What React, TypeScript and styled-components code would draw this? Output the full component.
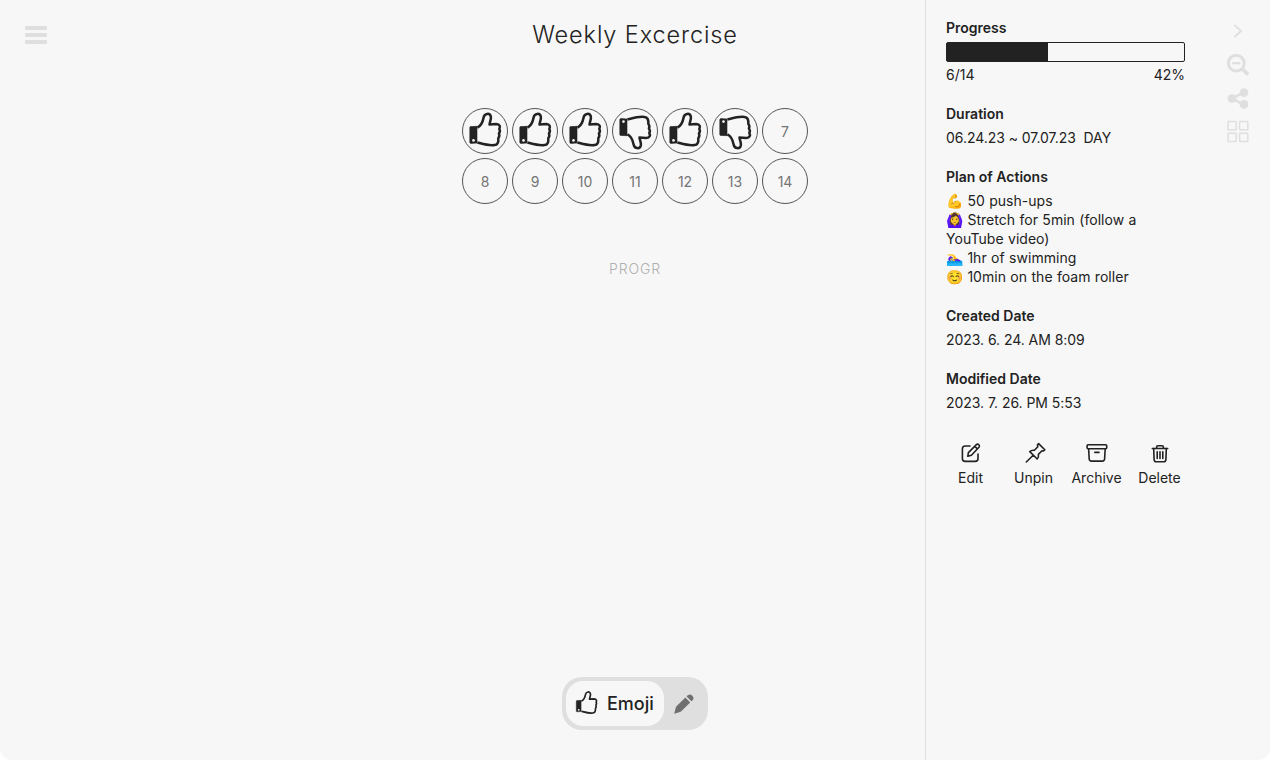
import React, { FC, ReactNode } from "react";
import styled, { createGlobalStyle } from "styled-components";

type Mark = "up" | "down" | null;

const TOTAL_DAYS = 14;
const MARKS: Mark[] = ["up", "up", "up", "down", "up", "down"];
const DAYS: Mark[] = Array.from(
  { length: TOTAL_DAYS },
  (_, i) => MARKS[i] ?? null
);

const PLAN = [
  "💪 50 push-ups",
  "🙆‍♀️ Stretch for 5min (follow a YouTube video)",
  "🏊‍♀️ 1hr of swimming",
  "☺️ 10min on the foam roller",
];

const Thumb: FC<{ size: number; down?: boolean }> = ({ size, down }) => (
  <ThumbSvg width={size} height={size} viewBox="0 0 46 46" $down={down}>
    <path
      d="M8.6 18.6L15 18.3V35L9 35.4Q7.8 35.4 7.8 34.2V19.6Q7.8 18.6 8.6 18.6Z"
      fill="#222"
      stroke="#222"
      strokeWidth="0.6"
    />
    <circle cx="11.5" cy="32.4" r="1.3" fill="#f7f7f7" />
    <path
      d="M15.4 19.6C18.6 18 20.7 14.5 21.6 9.5C22.3 5.2 28 4.4 28.9 8.8C29.3 11.5 27.6 14 27.5 16.6L34.2 16.1C38 16.2 38.6 19 37.3 20.8C38.1 22.3 37.9 24.3 36.9 25.5C37.7 27.2 37.3 29 36.3 30.3C36.6 33.8 35.8 36.7 32.5 37.1C27 38 21 36 15.4 34.5"
      fill="none"
      stroke="#222"
      strokeWidth="2.5"
      strokeLinejoin="round"
    />
  </ThumbSvg>
);

const EditIcon = () => (
  <LineSvg width="22" height="22" viewBox="0 0 22 22">
    <path d="M10 4H5.2Q2.4 4 2.4 6.8V16.8Q2.4 19.4 5.2 19.4H15.2Q18 19.4 18 16.8V12" />
    <path d="M7.8 14.3L8.4 10.6L16.4 2.6Q17.6 1.6 18.8 2.7Q20.1 4 19 5.3L11.4 13.2ZM14.8 4.3L17.4 6.8" />
  </LineSvg>
);

const PinIcon = () => (
  <LineSvg width="26" height="22" viewBox="-4 0 26 22">
    <path d="M13.6 1.6L19.8 7.8L18.4 9L17 8.8L13.4 12.4Q14 15.3 12.2 17L4.8 9.6Q6.4 7.9 9.4 8.3L12.8 4.7L12.4 3ZM8.2 13.2L1.3 20" />
  </LineSvg>
);

const ArchiveIcon = () => (
  <LineSvg width="22" height="22" viewBox="0 0 22 22">
    <rect x="1.1" y="2.8" width="19.6" height="3.9" rx="1" />
    <path d="M2.6 6.8L3.2 17Q3.4 19.1 5.4 19.1H16.4Q18.4 19.1 18.6 17L19.2 6.8M8.8 10.4H13" />
  </LineSvg>
);

const TrashIcon = () => (
  <LineSvg width="22" height="22" viewBox="0 0 22 22">
    <path d="M3.3 6.5H18.7M7.6 6.3V5.1Q7.6 3.8 9 3.8H13Q14.4 3.8 14.4 5.1V6.3" />
    <path d="M4.7 6.6L5.1 17.6Q5.3 19.7 7 19.7H15Q16.7 19.7 16.9 17.6L17.3 6.6M8.2 9.7V16.5M11 9.7V16.5M13.8 9.7V16.5" />
  </LineSvg>
);

const PencilIcon = () => (
  <svg width="22" height="22" viewBox="0 0 22 22" fill="#6f6f6f">
    <path d="M1.2 20.8L2.8 14.6Q3.2 13.6 4 12.8L12.4 4.6L17.2 9.4L8.8 17.8Q8 18.6 7 19Z" />
    <path d="M13.6 3.5L15 2.2Q17.2.6 19.3 2.7Q21.4 5 19.8 7L18.4 8.3Z" />
  </svg>
);

const ChevronIcon = () => (
  <svg width="24" height="22" viewBox="0 0 24 22" fill="none">
    <path d="M8.4 4.9L15 11L8.4 17.1" stroke="#dfdfdf" strokeWidth="1.9" />
  </svg>
);

const ZoomOutIcon = () => (
  <svg width="24" height="24" viewBox="0 0 24 24" fill="none" stroke="#dfdfdf">
    <circle cx="10.3" cy="10.2" r="7.9" strokeWidth="3" />
    <path d="M6.3 10.2H14.3" strokeWidth="2.2" />
    <path d="M16.5 16.3L22.2 21.6" strokeWidth="3.6" />
  </svg>
);

const ShareIcon = () => (
  <svg width="24" height="21" viewBox="0 0.6 24 21">
    <path
      d="M18 5L6 11.2L18 17.4"
      fill="none"
      stroke="#dfdfdf"
      strokeWidth="2.6"
    />
    <g fill="#dfdfdf">
      <circle cx="18" cy="5.2" r="4.3" />
      <circle cx="5.9" cy="11.1" r="4.3" />
      <circle cx="18" cy="17" r="4.3" />
    </g>
  </svg>
);

const GridIcon = () => (
  <svg
    width="24"
    height="23"
    viewBox="0 -0.6 24 23"
    fill="none"
    stroke="#dfdfdf"
    strokeWidth="1.5"
  >
    <rect x="2" y="1" width="8.2" height="8.2" rx="0.6" />
    <rect x="13.6" y="1" width="8.2" height="8.2" rx="0.6" />
    <rect x="2" y="12.6" width="8.2" height="8.2" rx="0.6" />
    <rect x="13.6" y="12.6" width="8.2" height="8.2" rx="0.6" />
  </svg>
);

const ACTIONS = [
  { label: "Edit", icon: <EditIcon /> },
  { label: "Unpin", icon: <PinIcon /> },
  { label: "Archive", icon: <ArchiveIcon /> },
  { label: "Delete", icon: <TrashIcon /> },
];

const Field: FC<{ title: string; children: ReactNode }> = ({
  title,
  children,
}) => (
  <FieldWrapper>
    <FieldTitle>{title}</FieldTitle>
    {children}
  </FieldWrapper>
);

const App: FC = () => {
  const percent = Math.floor((MARKS.length / TOTAL_DAYS) * 100);

  return (
    <>
      <GlobalStyle />
      <Page>
        <LeftColumn>
          <MenuButton aria-label="Menu">
            <span />
            <span />
            <span />
          </MenuButton>
        </LeftColumn>

        <Main>
          <Title>Weekly Excercise</Title>
          <Board>
            {DAYS.map((mark, i) => (
              <Day key={i}>
                {mark ? <Thumb size={46} down={mark === "down"} /> : i + 1}
              </Day>
            ))}
          </Board>
          <Watermark>PROGR</Watermark>
          <Toggle>
            <EmojiTab>
              <Thumb size={31} />
              Emoji
            </EmojiTab>
            <PencilTab aria-label="Draw">
              <PencilIcon />
            </PencilTab>
          </Toggle>
        </Main>

        <Aside>
          <Details>
            <Field title="Progress">
              <ProgressBar>
                <ProgressFill style={{ width: `${percent + 0.6}%` }} />
              </ProgressBar>
              <ProgressLabels>
                <span>
                  {MARKS.length}/{TOTAL_DAYS}
                </span>
                <span>{percent}%</span>
              </ProgressLabels>
            </Field>
            <Field title="Duration">
              <Value>{"06.24.23 ~ 07.07.23  DAY"}</Value>
            </Field>
            <Field title="Plan of Actions">
              {PLAN.map((line) => (
                <PlanLine key={line}>{line}</PlanLine>
              ))}
            </Field>
            <Field title="Created Date">
              <Value>2023. 6. 24. AM 8:09</Value>
            </Field>
            <Field title="Modified Date">
              <Value>2023. 7. 26. PM 5:53</Value>
            </Field>
            <Actions>
              {ACTIONS.map(({ label, icon }) => (
                <Action key={label}>
                  {icon}
                  {label}
                </Action>
              ))}
            </Actions>
          </Details>
          <Tools>
            <ChevronIcon />
            <ZoomOutIcon />
            <ShareIcon />
            <GridIcon />
          </Tools>
        </Aside>
      </Page>
    </>
  );
};

export default App;

const GlobalStyle = createGlobalStyle`
  * {
    box-sizing: border-box;
  }

  body {
    margin: 0;
    background: #fff;
    color: #222;
    font-family: Inter, "Liberation Sans", sans-serif;
  }

  button {
    padding: 0;
    border: 0;
    background: none;
    color: inherit;
    font-family: inherit;
  }
`;

const Page = styled.div`
  display: grid;
  grid-template-columns: 345px 1fr 345px;
  height: 760px;
  overflow: hidden;
  background: #f7f7f7;
  border-radius: 0 0 12px 12px;
`;

const LeftColumn = styled.div`
  padding: 25.5px 25px;
`;

const MenuButton = styled.button`
  display: flex;
  flex-direction: column;
  gap: 3px;
  width: 22px;

  span {
    height: 4px;
    border-radius: 1px;
    background: #dfdfdf;
  }
`;

const Main = styled.main`
  display: flex;
  flex-direction: column;
  align-items: center;
  padding: 20px 0 30px;
`;

const Title = styled.h1`
  margin: 0;
  font-size: 23.5px;
  font-weight: 300;
  line-height: 30px;
  letter-spacing: 0.88px;
`;

const Board = styled.div`
  display: grid;
  grid-template-columns: repeat(7, 46px);
  gap: 4px;
  margin-top: 58px;
`;

const Day = styled.div`
  display: flex;
  align-items: center;
  justify-content: center;
  height: 46px;
  border: 1px solid #555;
  border-radius: 50%;
  color: #757575;
  font-size: 14px;

  svg {
    flex: none;
  }
`;

const ThumbSvg = styled.svg<{ $down?: boolean }>`
  transform: ${({ $down }) => ($down ? "scaleY(-1)" : "none")};
`;

const LineSvg = styled.svg`
  fill: none;
  stroke: #222;
  stroke-width: 1.6;
  stroke-linecap: round;
  stroke-linejoin: round;
`;

const Watermark = styled.div`
  margin-top: 55px;
  color: #b0b0b0;
  font-size: 14px;
  font-weight: 300;
  line-height: 20px;
  letter-spacing: 0.9px;
`;

const Toggle = styled.div`
  display: flex;
  width: 146px;
  height: 53px;
  margin-top: auto;
  padding: 4px;
  border-radius: 20px;
  background: #dfdfdf;
`;

const EmojiTab = styled.button`
  display: flex;
  align-items: center;
  gap: 5px;
  width: 98px;
  padding-left: 5px;
  border-radius: 17px;
  background: #f7f7f7;
  font-size: 18px;
  font-weight: 500;
`;

const PencilTab = styled.button`
  display: flex;
  flex: 1;
  align-items: center;
  justify-content: center;
`;

const Aside = styled.aside`
  display: flex;
  justify-content: space-between;
  padding: 18px 20px 0;
  border-left: 1px solid #dfdfdf;
`;

const Details = styled.div`
  width: 239px;
  font-size: 14px;
  line-height: 19px;
`;

const FieldWrapper = styled.section`
  margin-bottom: 20px;
`;

const FieldTitle = styled.h2`
  margin: 0 0 5px;
  font-size: 14px;
  font-weight: 600;
  line-height: 19px;
`;

const Value = styled.div`
  white-space: pre-wrap;
  letter-spacing: -0.05px;
`;

const PlanLine = styled.div`
  letter-spacing: 0.03px;
  word-spacing: 0.4px;
`;

const ProgressBar = styled.div`
  height: 20px;
  margin-bottom: 3px;
  border: 1px solid #222;
  border-radius: 2px;
`;

const ProgressFill = styled.div`
  height: 100%;
  background: #222;
`;

const ProgressLabels = styled.div`
  display: flex;
  justify-content: space-between;
`;

const Actions = styled.div`
  display: grid;
  grid-template-columns: repeat(4, 63px);
  margin: 30px -7px 0;
`;

const Action = styled.button`
  display: flex;
  flex-direction: column;
  align-items: center;
  gap: 4px;
  font-size: 14px;
  line-height: 19px;
`;

const Tools = styled.div`
  display: flex;
  flex-direction: column;
  align-items: center;
  gap: 11px;
  width: 24px;
  margin-top: 2px;
`;
